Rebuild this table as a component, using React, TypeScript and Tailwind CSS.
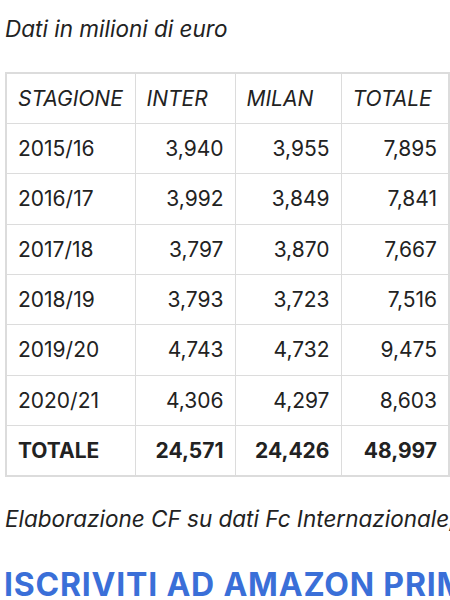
import React from "react";

const rows = [
  ["2015/16", "3,940", "3,955", "7,895"],
  ["2016/17", "3,992", "3,849", "7,841"],
  ["2017/18", "3,797", "3,870", "7,667"],
  ["2018/19", "3,793", "3,723", "7,516"],
  ["2019/20", "4,743", "4,732", "9,475"],
  ["2020/21", "4,306", "4,297", "8,603"],
];

const cell = "border border-[#dcdcdc] h-[50.4px] px-[11px] align-middle";

export default function App() {
  return (
    <div
      className="w-[450px] h-[600px] overflow-hidden bg-white text-[#222] pl-[5px]"
      style={{ fontFamily: 'Inter, "Noto Sans", sans-serif' }}
    >
      <p className="pt-[14px] text-[22.5px] leading-[30px] italic whitespace-nowrap">
        Dati in milioni di euro
      </p>

      <table className="mt-[28px] border-collapse text-[21px] border-2 border-[#dcdcdc]">
        <colgroup>
          <col className="w-[129px]" />
          <col className="w-[100px]" />
          <col className="w-[106px]" />
          <col className="w-[108px]" />
        </colgroup>
        <thead>
          <tr className="italic">
            <td className={`${cell} text-left`}>STAGIONE</td>
            <td className={`${cell} text-left`}>INTER</td>
            <td className={`${cell} text-left`}>MILAN</td>
            <td className={`${cell} text-left`}>TOTALE</td>
          </tr>
        </thead>
        <tbody>
          {rows.map((r) => (
            <tr key={r[0]}>
              <td className={`${cell} text-left`}>{r[0]}</td>
              <td className={`${cell} text-right`}>{r[1]}</td>
              <td className={`${cell} text-right`}>{r[2]}</td>
              <td className={`${cell} text-right`}>{r[3]}</td>
            </tr>
          ))}
          <tr className="font-bold">
            <td className={`${cell} text-left`}>TOTALE</td>
            <td className={`${cell} text-right`}>24,571</td>
            <td className={`${cell} text-right`}>24,426</td>
            <td className={`${cell} text-right`}>48,997</td>
          </tr>
        </tbody>
      </table>

      <p className="mt-[27px] text-[22.5px] leading-[30px] italic whitespace-nowrap">
        Elaborazione CF su dati Fc Internazionale, AC Milan
      </p>

      <h2 className="mt-[33px] text-[32px] leading-[36px] font-bold tracking-[0.8px] text-[#3a6fd8] whitespace-nowrap -ml-[1px]">
        ISCRIVITI AD AMAZON PRIME
      </h2>
    </div>
  );
}
